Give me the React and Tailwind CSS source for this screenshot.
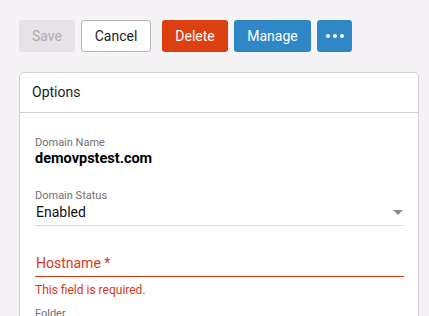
const Btn = ({ className, children }) => (
  <button className={`h-8 rounded-[3px] text-[14px] leading-none ${className}`}>{children}</button>
);

export default function App() {
  return (
    <div className="min-h-screen bg-[#f6f3f6] pt-5 pl-[19px] pr-[10px] font-['Roboto',sans-serif]">
      <div className="flex items-center">
        <Btn className="w-[56px] bg-[#e6e3e6] text-[#b1aeb1]">Save</Btn>
        <Btn className="ml-[6px] w-[70px] bg-white border border-[#b9b6b9] text-[#222]">Cancel</Btn>
        <Btn className="ml-[11px] w-[66px] bg-[#dc3f10] text-white">Delete</Btn>
        <Btn className="ml-[6px] w-[77px] bg-[#2f87c7] text-white">Manage</Btn>
        <Btn className="ml-[6px] w-[35px] bg-[#2f87c7] text-white flex items-center justify-center gap-[3px]">
          <span className="w-[4px] h-[4px] rounded-full bg-white" />
          <span className="w-[4px] h-[4px] rounded-full bg-white" />
          <span className="w-[4px] h-[4px] rounded-full bg-white" />
        </Btn>
      </div>

      <div className="mt-5 w-[400px] bg-white border border-[#d2d0d2] rounded-[5px]">
        <div className="h-10 flex items-center px-[12px] border-b border-[#d2d0d2] text-[14px] text-[#1c1c1c]">
          Options
        </div>
        <div className="pl-[15px] pr-[14px] pt-[23px] pb-6">
          <div className="text-[11px] leading-[13px] text-[#707070]">Domain Name</div>
          <div className="mt-[1px] text-[14.5px] leading-[18px] font-bold text-black">demovpstest.com</div>

          <div className="mt-[21px] text-[11px] leading-[13px] text-[#707070]">Domain Status</div>
          <div className="flex items-center justify-between h-[24px] pb-[3px] border-b border-[#dcdcdc]">
            <span className="text-[14px] text-[#111] pl-[1px]">Enabled</span>
            <span className="mr-[1px] w-0 h-0 border-l-[5px] border-r-[5px] border-t-[5px] border-l-transparent border-r-transparent border-t-[#8c8a8e]" />
          </div>

          <div className="mt-[24px] h-[27px] flex items-center border-b border-[#d93a14] text-[14px] text-[#d9361a] pl-[1px]">
            Hostname *
          </div>
          <div className="mt-[6px] text-[12px] leading-[14px] text-[#d9361a]">This field is required.</div>

          <div className="mt-[10px] text-[11px] leading-[13px] text-[#707070]">Folder</div>
          <div className="h-[24px] border-b border-[#dcdcdc]" />
        </div>
      </div>
    </div>
  );
}
